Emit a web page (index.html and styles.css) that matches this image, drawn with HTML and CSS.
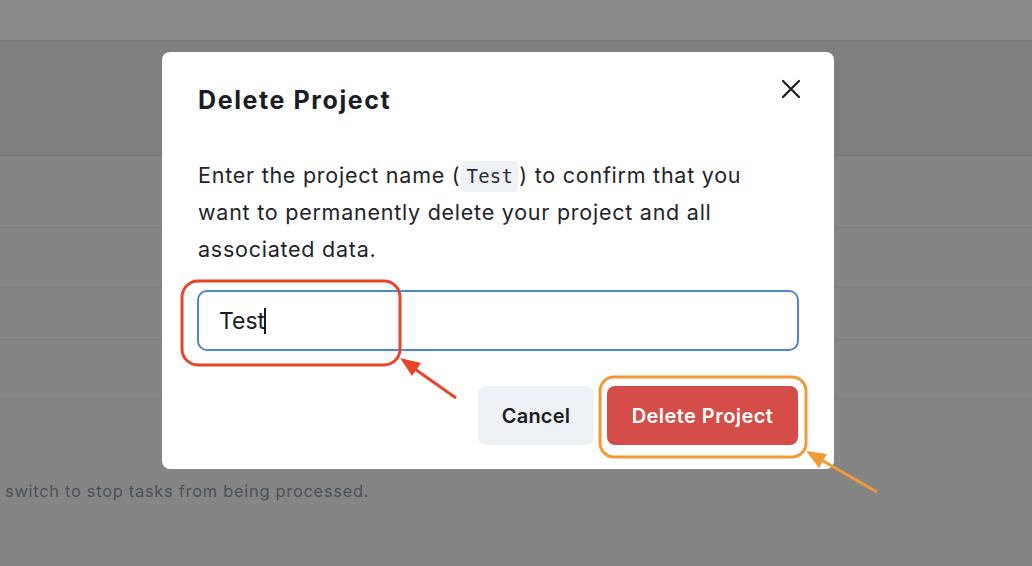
FILE: index.html
```html
<!DOCTYPE html>
<html lang="en">
<head>
<meta charset="utf-8">
<title>Delete Project</title>
<link rel="stylesheet" href="styles.css">
</head>
<body>
<div class="page">
  <header class="topbar"></header>
  <section class="band"></section>
  <div class="row row-1"></div>
  <div class="row row-2"></div>
  <div class="row row-3"></div>
  <div class="row row-4"></div>
  <p class="hint">switch to stop tasks from being processed.</p>
</div>

<div class="modal" role="dialog" aria-labelledby="dlg-title">
  <button class="close" aria-label="Close">
    <svg width="20" height="20" viewBox="0 0 20 20"><path d="M2 2 L18 18 M18 2 L2 18" stroke="#1b1d25" stroke-width="2.2" stroke-linecap="round" fill="none"/></svg>
  </button>
  <h2 id="dlg-title" class="title">Delete Project</h2>
  <p class="desc">Enter the project name (<code class="code">Test</code>) to confirm that you want to permanently delete your project and all associated data.</p>
  <div class="field"><span class="value">Test</span><span class="caret"></span></div>
  <div class="actions">
    <button class="btn btn-cancel">Cancel</button>
    <button class="btn btn-delete">Delete Project</button>
  </div>
</div>

<svg class="annot" width="1032" height="566" viewBox="0 0 1032 566">
  <rect x="182" y="281" width="218" height="84" rx="16" fill="none" stroke="#e8442a" stroke-width="3"/>
  <line x1="456" y1="398" x2="412" y2="367" stroke="#e8442a" stroke-width="3"/>
  <polygon points="400,358 421,363 412,376" fill="#e8442a"/>
  <rect x="600" y="377" width="206" height="80" rx="14" fill="none" stroke="#f19a37" stroke-width="3"/>
  <line x1="877" y1="492" x2="818" y2="458" stroke="#f19a37" stroke-width="3"/>
  <polygon points="806,451 827,454 819,468" fill="#f19a37"/>
</svg>
</body>
</html>
```

FILE: styles.css
```css
html, body {
  margin: 0;
  padding: 0;
}
body {
  width: 1032px;
  height: 566px;
  overflow: hidden;
  background: #858585;
  font-family: Inter, "Noto Sans", sans-serif;
  position: relative;
}
.page {
  display: flex;
  flex-direction: column;
}
.topbar {
  height: 40px;
  background: #888888;
  box-shadow: 0 1px 2px rgba(0,0,0,0.08);
  position: relative;
  z-index: 1;
}
.band {
  height: 115px;
  background: #7e7f81;
  border-bottom: 1px solid #77787a;
}
.row {
  border-bottom: 1px solid #7b7b7b;
}
.row-1 { height: 71px; }
.row-2 { height: 59px; }
.row-3 { height: 51px; }
.row-4 { height: 58px; }
.hint {
  margin: 82px 0 0 5px;
  font-size: 16.5px;
  line-height: 20px;
  letter-spacing: 0.68px;
  color: #4b515a;
}

.modal {
  position: absolute;
  left: 162px;
  top: 52px;
  width: 672px;
  height: 417px;
  box-sizing: border-box;
  background: #ffffff;
  border-radius: 8px;
  padding: 32px 35px 24px;
  display: flex;
  flex-direction: column;
}
.close {
  position: absolute;
  top: 27px;
  right: 33px;
  width: 20px;
  height: 20px;
  padding: 0;
  border: 0;
  background: none;
  display: flex;
}
.title {
  margin: 0 0 0 1px;
  font-size: 25px;
  line-height: 32px;
  font-weight: 700;
  color: #1b1d25;
  letter-spacing: 1.6px;
}
.desc {
  margin: 41px 0 0 1px;
  max-width: 575px;
  font-size: 21.5px;
  line-height: 37px;
  letter-spacing: 0.75px;
  color: #1f232b;
}
.code {
  display: inline-block;
  font-family: "DejaVu Sans Mono", "Liberation Mono", monospace;
  font-size: 19px;
  line-height: 31px;
  letter-spacing: 0.3px;
  background: #eef1f5;
  border-radius: 4px;
  padding: 0 5px;
  margin: 0 1px;
  color: #2a2e36;
}
.field {
  margin-top: 22px;
  height: 61px;
  box-sizing: border-box;
  border: 2px solid #4f86d3;
  border-radius: 10px;
  display: flex;
  align-items: center;
  padding-left: 20px;
}
.value {
  font-size: 23px;
  color: #1b1d25;
}
.caret {
  width: 2px;
  height: 26px;
  background: #1b1d25;
  margin-left: -1px;
}
.actions {
  margin-top: 35px;
  display: flex;
  justify-content: flex-end;
  gap: 13px;
  padding-right: 1px;
}
.btn {
  height: 59px;
  border: 0;
  border-radius: 8px;
  font-family: Inter, "Noto Sans", sans-serif;
  font-size: 20px;
  font-weight: 600;
}
.btn-cancel {
  width: 116px;
  background: #eef1f5;
  color: #1b1d25;
  letter-spacing: 0.2px;
}
.btn-delete {
  width: 191px;
  background: #d44d48;
  color: #ffffff;
  letter-spacing: 0.45px;
}
.annot {
  position: absolute;
  left: 0;
  top: 0;
}
```
